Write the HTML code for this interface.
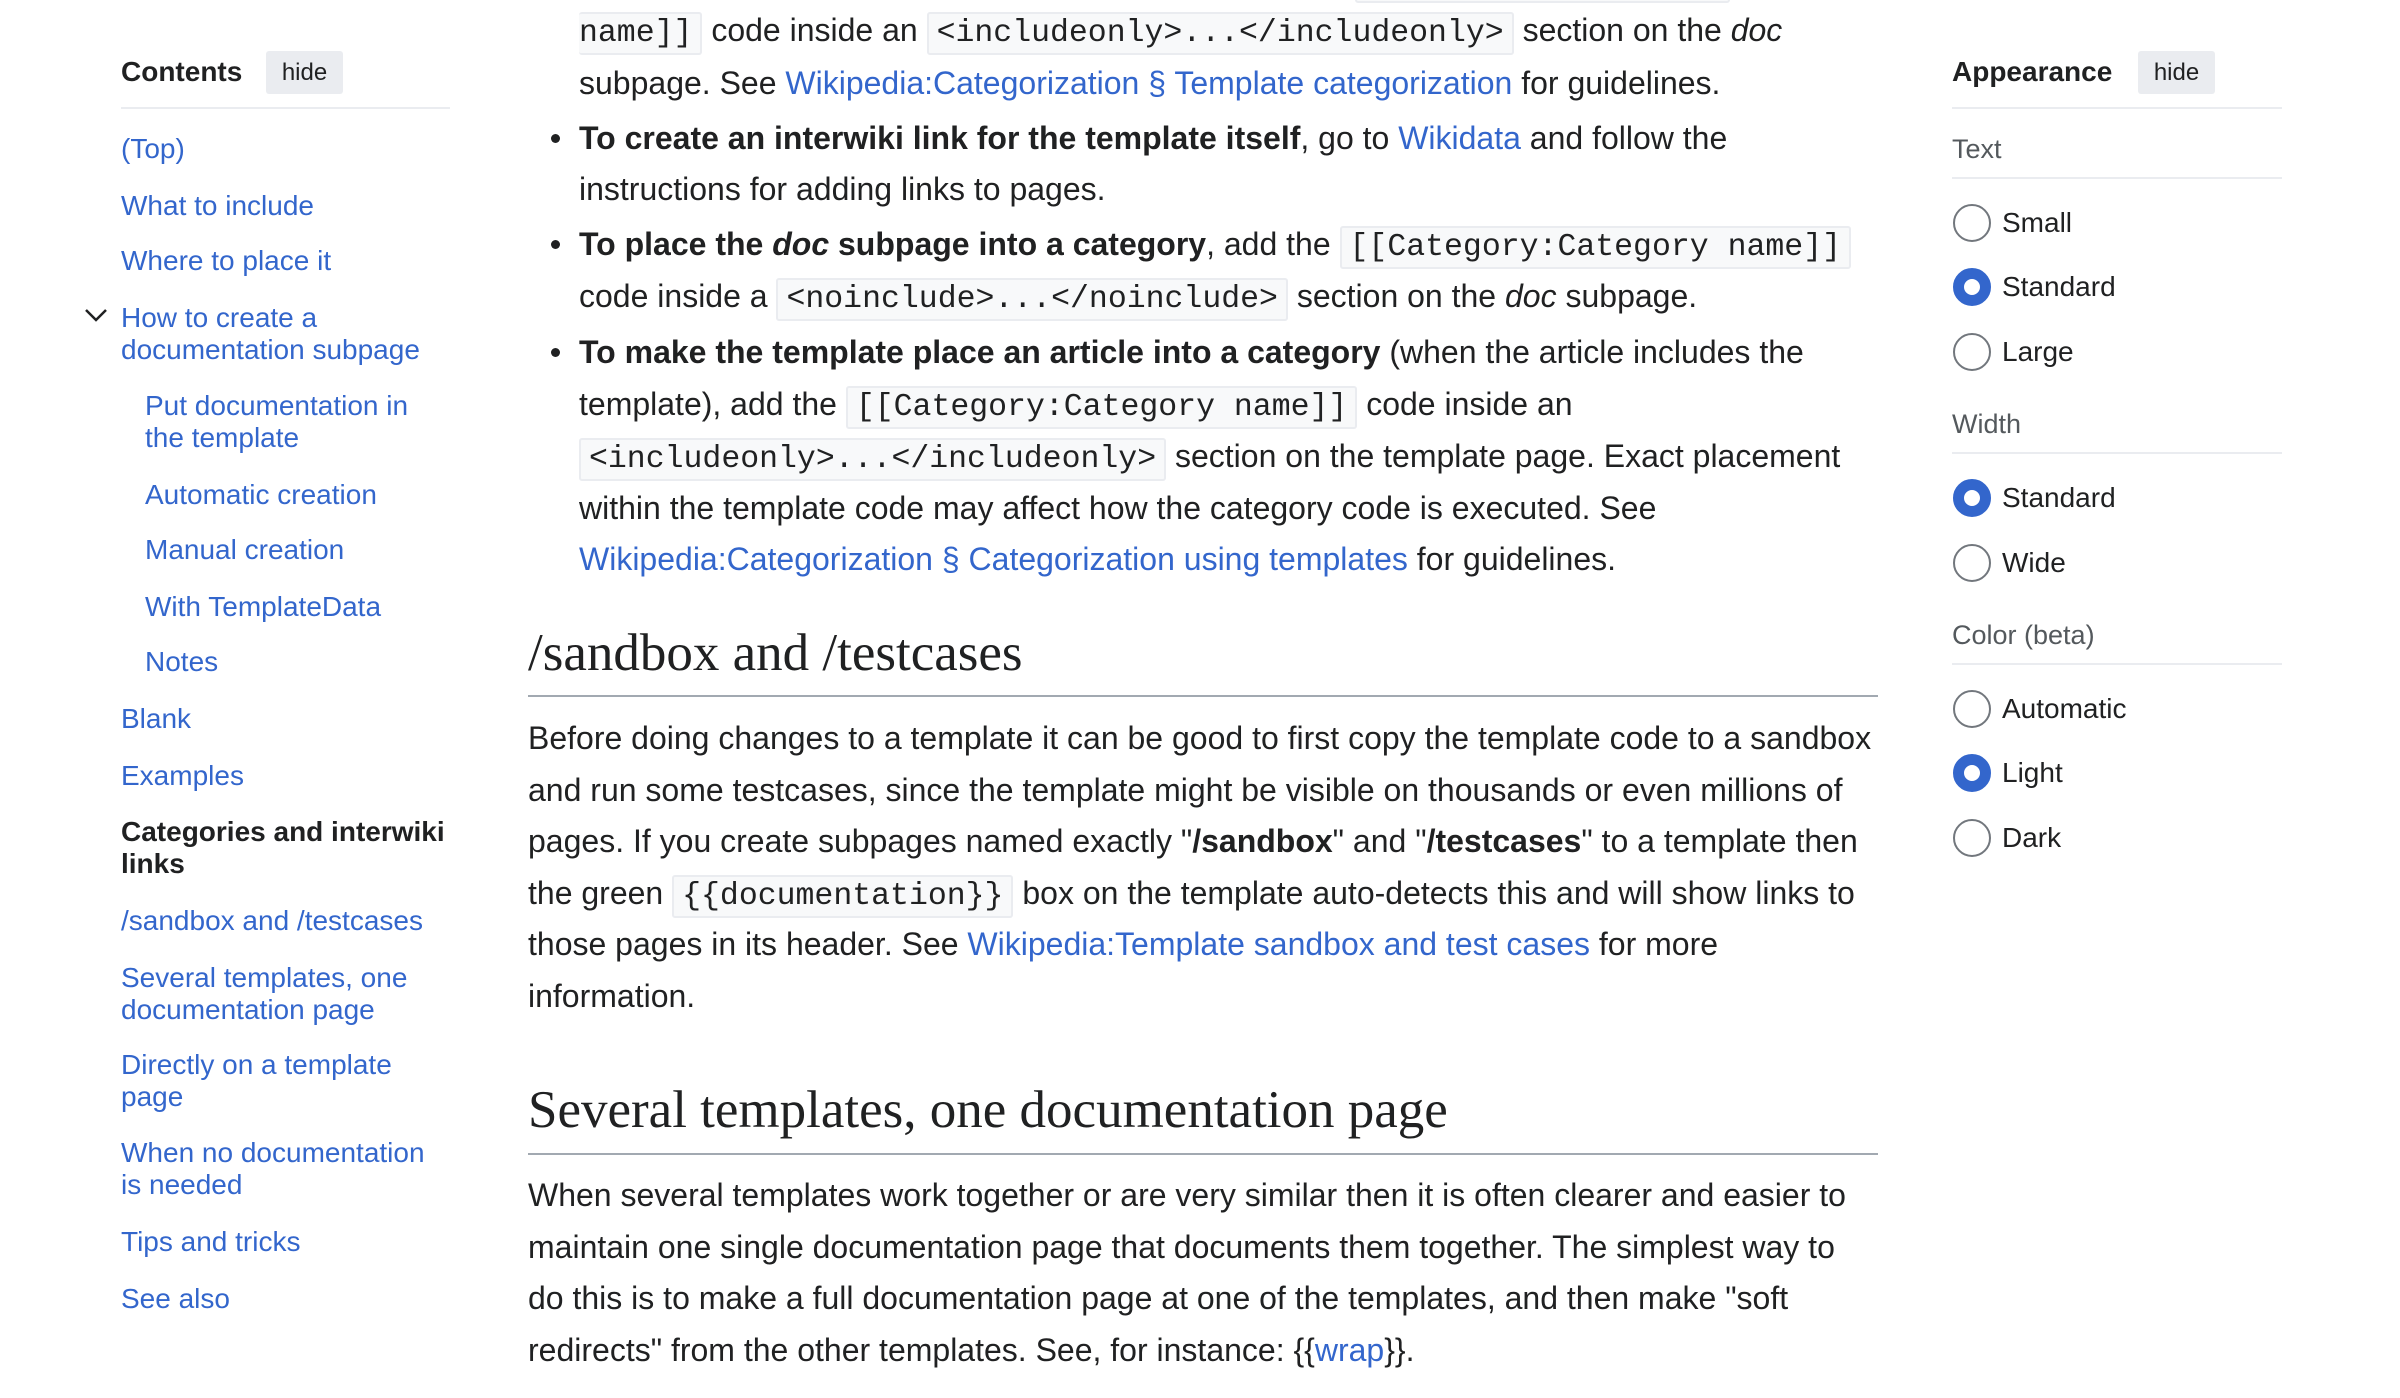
<!DOCTYPE html>
<html><head><meta charset="utf-8"><style>
*{margin:0;padding:0;box-sizing:border-box}
body{width:2400px;height:1398px;overflow:hidden;background:#fff;font-family:"Liberation Sans",Arial,sans-serif;color:#202122;position:relative}
a{color:#3366cc;text-decoration:none}
.l{position:absolute;white-space:nowrap;font-size:32px;line-height:52px;height:52px}
code{font-family:"Liberation Mono",monospace;font-size:31.5px;background:#f8f9fa;border:2px solid #eaecf0;border-radius:3px;padding:2px 8px}
.t{position:absolute;left:121px;font-size:28px;line-height:32px;color:#3366cc;white-space:nowrap}
.s{left:145px}
.hide{position:absolute;background:#eaecf0;border-radius:3px;font-size:24px;line-height:43px;text-align:center;color:#202122}
.hr{position:absolute;height:2px;background:#eaecf0}
.bul{position:absolute;left:551px;width:9px;height:9px;border-radius:50%;background:#202122}
.h{position:absolute;left:528px;font-family:"Liberation Serif",Georgia,serif;font-size:53px;line-height:60px;white-space:nowrap}
.hl{position:absolute;left:528px;width:1350px;height:2px;background:#a2a9b1}
.r{position:absolute;left:1953px;width:38px;height:38px;border-radius:50%;border:2px solid #72777d;background:#fff}
.r.on{border:11px solid #3366cc}
.rl{position:absolute;left:2002px;font-size:28px;line-height:32px;white-space:nowrap}
.sec{position:absolute;left:1952px;font-size:27px;line-height:32px;color:#54595d}
</style></head><body>

<!-- TOC -->
<div style="position:absolute;left:121px;top:56px;font-size:28px;font-weight:bold;line-height:32px">Contents</div>
<div class="hide" style="left:266px;top:51px;width:77px;height:43px">hide</div>
<div class="hr" style="left:121px;top:107px;width:329px"></div>
<div class="t" style="top:133px">(Top)</div>
<div class="t" style="top:190px">What to include</div>
<div class="t" style="top:245px">Where to place it</div>
<svg style="position:absolute;left:84px;top:307px" width="24" height="16" viewBox="0 0 24 16"><path d="M2 3 L12 13 L22 3" fill="none" stroke="#202122" stroke-width="2.5"/></svg>
<div class="t" style="top:302px">How to create a<br>documentation subpage</div>
<div class="t s" style="top:390px">Put documentation in<br>the template</div>
<div class="t s" style="top:479px">Automatic creation</div>
<div class="t s" style="top:534px">Manual creation</div>
<div class="t s" style="top:591px">With TemplateData</div>
<div class="t s" style="top:646px">Notes</div>
<div class="t" style="top:703px">Blank</div>
<div class="t" style="top:760px">Examples</div>
<div class="t" style="top:816px;color:#202122;font-weight:bold">Categories and interwiki<br>links</div>
<div class="t" style="top:905px">/sandbox and /testcases</div>
<div class="t" style="top:962px">Several templates, one<br>documentation page</div>
<div class="t" style="top:1049px">Directly on a template<br>page</div>
<div class="t" style="top:1137px">When no documentation<br>is needed</div>
<div class="t" style="top:1226px">Tips and tricks</div>
<div class="t" style="top:1283px">See also</div>

<!-- Main -->
<div style="position:absolute;left:1355px;top:-40px;width:375px;height:43px;background:#f8f9fa;border:2px solid #eaecf0;border-radius:3px"></div>
<div class="l" style="left:579px;top:4px"><code style="border-left:none;padding-left:0">name]]</code> code inside an <code>&lt;includeonly&gt;...&lt;/includeonly&gt;</code> section on the <i>doc</i></div>
<div class="l" style="left:579px;top:57px">subpage. See <a>Wikipedia:Categorization § Template categorization</a> for guidelines.</div>
<div class="bul" style="top:134px"></div>
<div class="l" style="left:579px;top:112px"><b>To create an interwiki link for the template itself</b>, go to <a>Wikidata</a> and follow the</div>
<div class="l" style="left:579px;top:163px">instructions for adding links to pages.</div>
<div class="bul" style="top:240px"></div>
<div class="l" style="left:579px;top:218px"><b>To place the <i>doc</i> subpage into a category</b>, add the <code>[[Category:Category name]]</code></div>
<div class="l" style="left:579px;top:270px">code inside a <code>&lt;noinclude&gt;...&lt;/noinclude&gt;</code> section on the <i>doc</i> subpage.</div>
<div class="bul" style="top:348px"></div>
<div class="l" style="left:579px;top:326px"><b>To make the template place an article into a category</b> (when the article includes the</div>
<div class="l" style="left:579px;top:378px">template), add the <code>[[Category:Category name]]</code> code inside an</div>
<div class="l" style="left:579px;top:430px"><code>&lt;includeonly&gt;...&lt;/includeonly&gt;</code> section on the template page. Exact placement</div>
<div class="l" style="left:579px;top:482px">within the template code may affect how the category code is executed. See</div>
<div class="l" style="left:579px;top:533px"><a>Wikipedia:Categorization § Categorization using templates</a> for guidelines.</div>

<div class="h" style="top:623px">/sandbox and /testcases</div>
<div class="hl" style="top:695px"></div>
<div class="l" style="left:528px;top:712px">Before doing changes to a template it can be good to first copy the template code to a sandbox</div>
<div class="l" style="left:528px;top:764px">and run some testcases, since the template might be visible on thousands or even millions of</div>
<div class="l" style="left:528px;top:815px">pages. If you create subpages named exactly "<b>/sandbox</b>" and "<b>/testcases</b>" to a template then</div>
<div class="l" style="left:528px;top:867px">the green <code>{{documentation}}</code> box on the template auto-detects this and will show links to</div>
<div class="l" style="left:528px;top:918px">those pages in its header. See <a>Wikipedia:Template sandbox and test cases</a> for more</div>
<div class="l" style="left:528px;top:970px">information.</div>

<div class="h" style="top:1080px">Several templates, one documentation page</div>
<div class="hl" style="top:1153px"></div>
<div class="l" style="left:528px;top:1169px">When several templates work together or are very similar then it is often clearer and easier to</div>
<div class="l" style="left:528px;top:1221px">maintain one single documentation page that documents them together. The simplest way to</div>
<div class="l" style="left:528px;top:1272px">do this is to make a full documentation page at one of the templates, and then make "soft</div>
<div class="l" style="left:528px;top:1324px">redirects" from the other templates. See, for instance: {{<a>wrap</a>}}.</div>

<!-- Appearance -->
<div style="position:absolute;left:1952px;top:56px;font-size:28px;font-weight:bold;line-height:32px">Appearance</div>
<div class="hide" style="left:2138px;top:51px;width:77px;height:43px">hide</div>
<div class="hr" style="left:1952px;top:107px;width:330px"></div>
<div class="sec" style="top:133px">Text</div>
<div class="hr" style="left:1952px;top:177px;width:330px"></div>
<div class="r" style="top:204px"></div><div class="rl" style="top:207px">Small</div>
<div class="r on" style="top:268px"></div><div class="rl" style="top:271px">Standard</div>
<div class="r" style="top:333px"></div><div class="rl" style="top:336px">Large</div>
<div class="sec" style="top:408px">Width</div>
<div class="hr" style="left:1952px;top:452px;width:330px"></div>
<div class="r on" style="top:479px"></div><div class="rl" style="top:482px">Standard</div>
<div class="r" style="top:544px"></div><div class="rl" style="top:547px">Wide</div>
<div class="sec" style="top:619px">Color (beta)</div>
<div class="hr" style="left:1952px;top:663px;width:330px"></div>
<div class="r" style="top:690px"></div><div class="rl" style="top:693px">Automatic</div>
<div class="r on" style="top:754px"></div><div class="rl" style="top:757px">Light</div>
<div class="r" style="top:819px"></div><div class="rl" style="top:822px">Dark</div>
</body></html>
